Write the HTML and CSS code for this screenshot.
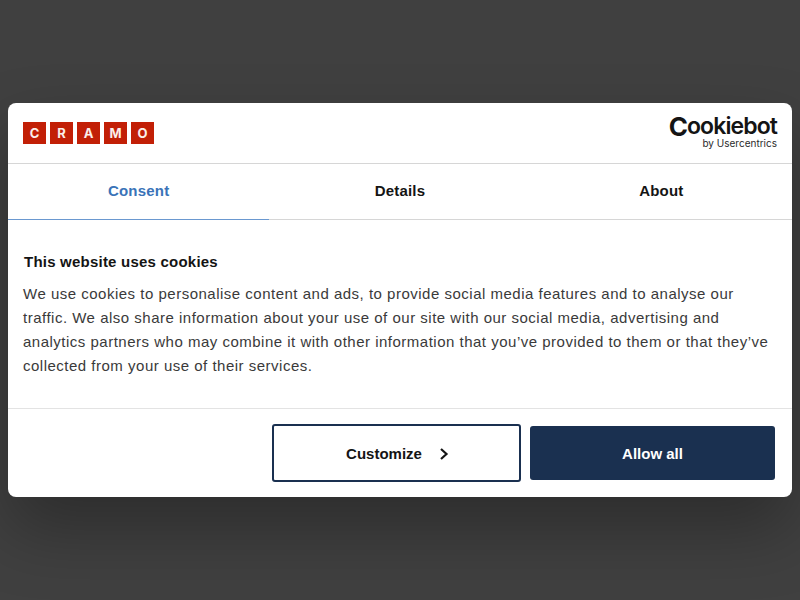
FILE: index.html
```html
<!DOCTYPE html>
<html lang="en">
<head>
  <meta charset="utf-8"/>
  <title>Cookie consent</title>
  <link rel="stylesheet" href="styles.css">
</head>
<body>

  <div class="dialog">
    <!-- Logos -->
    <header class="dialog-head">
      <div class="cramo">
        <span>C</span><span>R</span><span>A</span><span>M</span><span>O</span>
      </div>
      <div class="cookiebot">
        <div class="cookiebot-name"><span class="big-c">C</span>ookiebot</div>
        <div class="cookiebot-by">by Usercentrics</div>
      </div>
    </header>

    <!-- Tabs -->
    <nav class="tabs">
      <a class="tab active">Consent</a>
      <a class="tab">Details</a>
      <a class="tab">About</a>
    </nav>

    <!-- Text -->
    <main class="dialog-body">
      <h1>This website uses cookies</h1>
      <p>We use cookies to personalise content and ads, to provide social media features and to analyse our traffic. We also share information about your use of our site with our social media, advertising and analytics partners who may combine it with other information that you’ve provided to them or that they’ve collected from your use of their services.</p>
    </main>

    <!-- Buttons -->
    <footer class="dialog-foot">
      <button class="btn btn-outline">
        Customize
        <svg class="chevron" width="10" height="14" viewBox="0 0 10 14"><path d="M2 2l5.5 5L2 12" fill="none" stroke="#141414" stroke-width="2.2"/></svg>
      </button>
      <button class="btn btn-solid">Allow all</button>
    </footer>
  </div>

</body>
</html>
```

FILE: styles.css
```css
* { box-sizing: border-box; }
html, body {
  margin: 0;
  height: 100%;
}
body {
  display: flex;
  align-items: center;
  justify-content: center;
  background: #404040;
  font-family: "Liberation Sans", Arial, sans-serif;
  color: #141414;
}

/* dialog */
.dialog {
  width: 784px;
  height: 394px;
  display: flex;
  flex-direction: column;
  background: #fff;
  border-radius: 8px;
  box-shadow: 0 32px 68px rgba(0, 0, 0, .3);
}

/* header with logos */
.dialog-head {
  height: 61px;
  flex: none;
  display: flex;
  align-items: center;
  justify-content: space-between;
  padding: 0 15px;
  border-bottom: 1px solid #d6d6d6;
}
.cramo {
  display: flex;
  gap: 4px;
}
.cramo span {
  width: 23px;
  height: 22px;
  display: flex;
  align-items: center;
  justify-content: center;
  background: #c21f06;
  color: #fbeeea;
  font-size: 13px;
  font-weight: 700;
  font-family: "Inter", sans-serif;
}
.cookiebot {
  display: flex;
  flex-direction: column;
  align-items: flex-end;
  margin-top: -2px;
}
.cookiebot-name {
  height: 21px;
  font-family: "Inter", sans-serif;
  font-size: 23px;
  font-weight: 600;
  letter-spacing: -.9px;
  line-height: 21px;
  color: #141414;
}
.big-c {
  font-size: 26px;
  font-weight: 700;
  line-height: 0;
  vertical-align: -2px;
}
.cookiebot-by {
  font-family: "Inter", sans-serif;
  font-size: 10px;
  line-height: 12px;
  color: #2b2b2b;
}

/* tabs */
.tabs {
  height: 56px;
  flex: none;
  display: flex;
  border-bottom: 1px solid #d6d6d6;
}
.tab {
  flex: 1;
  display: flex;
  align-items: center;
  justify-content: center;
  font-size: 15px;
  font-weight: 700;
  letter-spacing: .2px;
  margin-bottom: -1px;
  padding-bottom: 3px;
}
.tab.active {
  color: #3a73b8;
  border-bottom: 1px solid #6a98d0;
}

/* text */
.dialog-body {
  flex: 1;
  padding: 32px 16px 0 15px;
  border-bottom: 1px solid #e3e3e3;
}
.dialog-body h1 {
  margin: 0 0 10px 1px;
  font-size: 15px;
  line-height: 20px;
  font-weight: 700;
  letter-spacing: .22px;
}
.dialog-body p {
  margin: 0;
  font-size: 15px;
  line-height: 24px;
  letter-spacing: .5px;
  color: #3a3a3a;
}

/* buttons */
.dialog-foot {
  height: 88px;
  flex: none;
  display: flex;
  align-items: center;
  justify-content: flex-end;
  gap: 9px;
  padding: 0 17px 0 0;
}
.btn {
  font-family: inherit;
  font-size: 15px;
  font-weight: 700;
  border-radius: 3px;
  display: flex;
  align-items: center;
  justify-content: center;
}
.btn-outline {
  width: 249px;
  height: 58px;
  background: #fff;
  border: 2px solid #1a3050;
  color: #141414;
  gap: 17px;
  padding-left: 8px;
}
.btn-solid {
  width: 245px;
  height: 54px;
  background: #1a3050;
  border: none;
  color: #fff;
}
.chevron { margin-top: 2px; }
```
